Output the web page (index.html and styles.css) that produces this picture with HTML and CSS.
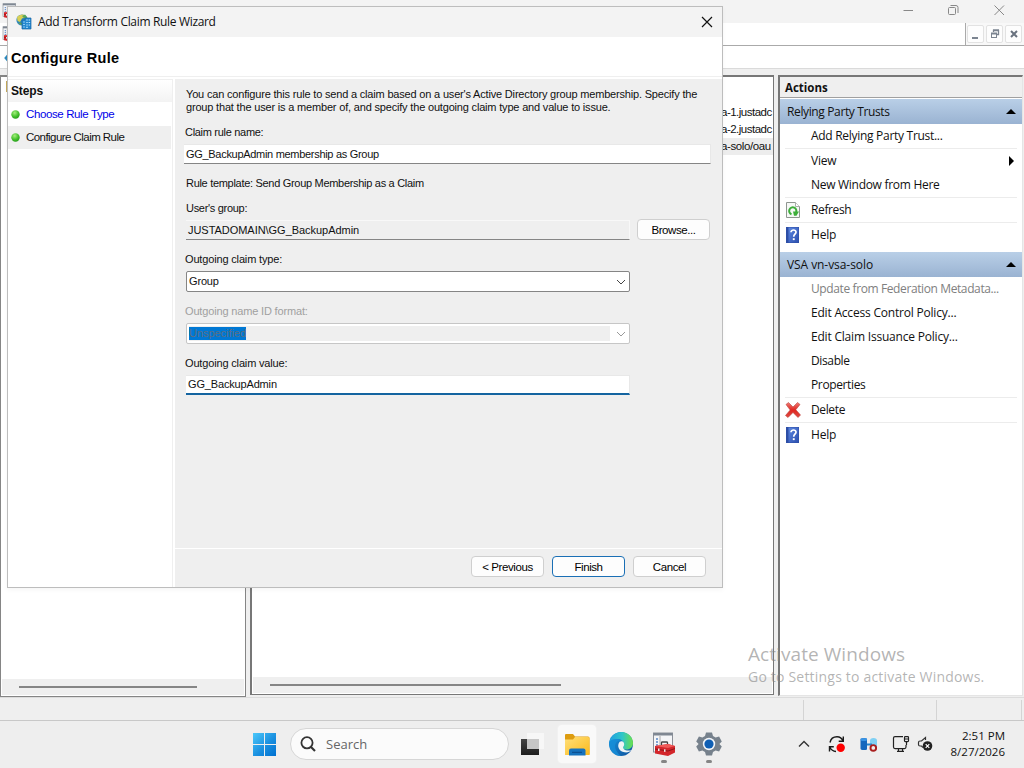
FILE: index.html
```html
<!DOCTYPE html>
<html lang="en">
<head>
<meta charset="utf-8">
<title>Add Transform Claim Rule Wizard</title>
<link rel="stylesheet" href="styles.css">
</head>
<body>
<svg class="defs" width="0" height="0">
  <defs>
    <linearGradient id="gWin" x1="0" y1="0" x2="1" y2="1"><stop offset="0" stop-color="#4cc8fa"/><stop offset="0.55" stop-color="#1a90e0"/><stop offset="1" stop-color="#0070d0"/></linearGradient>
    <linearGradient id="gHelp" x1="0" y1="0" x2="1" y2="1"><stop offset="0" stop-color="#5b86e0"/><stop offset="1" stop-color="#2c4fae"/></linearGradient>
    <linearGradient id="gFold" x1="0" y1="0" x2="1" y2="1"><stop offset="0" stop-color="#ffe07a"/><stop offset="1" stop-color="#fbb91c"/></linearGradient>
    <linearGradient id="gEdge" x1="0" y1="0" x2="1" y2="0"><stop offset="0" stop-color="#1f9fe0"/><stop offset="0.55" stop-color="#2fc6c8"/><stop offset="1" stop-color="#6be04a"/></linearGradient>
    <linearGradient id="gEdge2" x1="0" y1="0" x2="1" y2="1"><stop offset="0" stop-color="#1b9be2"/><stop offset="1" stop-color="#0d4f9c"/></linearGradient>
    <radialGradient id="gDot" cx="0.4" cy="0.3" r="0.75"><stop offset="0" stop-color="#a4ee7c"/><stop offset="0.6" stop-color="#43c02c"/><stop offset="1" stop-color="#259a18"/></radialGradient>
    <linearGradient id="gDel" x1="0" y1="0" x2="0" y2="1"><stop offset="0" stop-color="#f07c76"/><stop offset="0.5" stop-color="#df2620"/><stop offset="1" stop-color="#e04a42"/></linearGradient>
    <linearGradient id="gTask" x1="0" y1="0" x2="0" y2="1"><stop offset="0" stop-color="#444"/><stop offset="1" stop-color="#1c1c1c"/></linearGradient>
    <symbol id="help" viewBox="0 0 13 16"><rect width="13" height="16" fill="#2d4ea6"/><rect x="2.5" y=".5" width="10" height="15" fill="url(#gHelp)"/><path d="M5 5.300C5 2.200 10.200 2.300 10 5.300c-.1 1.900-2.300 2-2.300 4.400" fill="none" stroke="#fff" stroke-width="1.700"/><rect x="6.800" y="11.200" width="1.900" height="1.900" fill="#fff"/></symbol>
    <symbol id="toolbox" viewBox="0 0 24 24"><rect x="1.500" y="1" width="19" height="19" fill="#f4f5f7" stroke="#8a8f98"/><rect x="1.500" y="1" width="19" height="2.500" fill="#7f8792"/><path d="M4 7h2M4 10h2M4 13h2" stroke="#5a88c8" stroke-width="1.500"/><path d="M8 4v11" stroke="#aaa"/><path d="M9.500 13v-2.500q0-.5 1-.5h4q1 0 1 .5v2.500" fill="none" stroke="#444" stroke-width="1.300"/><path d="M3 14l13-2 7 2v6.500L16 24 3 21.500z" fill="#d3262b"/><path d="M3 14l13-2 7 2-7 2z" fill="#ef5a58"/><path d="M3 17l13 2 7-2.500" fill="none" stroke="#8e1418"/><rect x="6" y="16.500" width="1.500" height="2.500" fill="#eee"/><rect x="12" y="17.300" width="1.500" height="2.500" fill="#eee"/></symbol>
  </defs>
</svg>
<div class="desktop">
  <div class="console">
    <div class="console-title">
      <svg class="mini-icon" viewBox="0 0 24 24"><use href="#toolbox"/></svg>
      <svg class="caption-icons" width="120" height="23" viewBox="0 0 120 23" fill="none" stroke="#888"><path d="M3.500 10.500h9.500"/><rect x="48.500" y="7.500" width="7" height="7" rx="1"/><path d="M50.500 5.500h5.500q2 0 2 2v5.500"/><path d="M94.500 5.500l9.500 9.500m0-9.500l-9.500 9.500"/></svg>
    </div>
    <div class="console-menu">
      <div class="menu-strip"><svg class="mini-icon" viewBox="0 0 24 24"><use href="#toolbox"/></svg></div>
      <div class="mdi">
        <span class="mdi-btn"><svg width="16" height="16" viewBox="0 0 16 16"><path d="M4 12h6" stroke="#7b8490" stroke-width="2"/></svg></span>
        <span class="mdi-btn"><svg width="16" height="16" viewBox="0 0 16 16" fill="none" stroke="#7b8490"><path d="M6.500 6V4.500h5v4H10M6 4h6" stroke-width="1.300"/><rect x="4.500" y="7.500" width="5" height="4"/><path d="M4 7.500h6" stroke-width="2"/></svg></span>
        <span class="mdi-btn"><svg width="16" height="16" viewBox="0 0 16 16"><path d="M5 5l6 6m0-6l-6 6" stroke="#69727e" stroke-width="2"/></svg></span>
      </div>
    </div>
    <div class="console-tools"><svg width="10" height="12" viewBox="0 0 10 12"><path d="M9 2L5.500 6 9 10" fill="none" stroke="#2b8abf" stroke-width="2"/></svg></div>
    <div class="panes">
      <div class="pane tree"><div class="tree-body"><span class="folder"></span></div><div class="scroll"><span class="thumb"></span></div></div>
      <div class="pane list">
        <div class="list-body">
          <div class="list-row">a-1.justadc</div>
          <div class="list-row">a-2.justadc</div>
          <div class="list-row selected">a-solo/oau</div>
        </div>
        <div class="scroll"><span class="thumb"></span></div>
      </div>
      <div class="pane actions">
        <div class="actions-title">Actions</div>
        <div class="group-bar"><span class="t-rpt">Relying Party Trusts</span><b class="tri"></b></div>
        <div class="action"><i></i><span class="t-add">Add Relying Party Trust...</span></div>
        <div class="sep"></div>
        <div class="action"><i></i><span>View</span><b class="tri-right"></b></div>
        <div class="action"><i></i><span class="t-add">New Window from Here</span></div>
        <div class="sep"></div>
        <div class="action"><i><svg class="ic-refresh" width="14" height="16" viewBox="0 0 14 16"><path d="M.5.500h9l4 4v11H.500z" fill="#f6f8f6" stroke="#8f9690"/><path d="M9.500.500v4h4" fill="#fff" stroke="#a9aeaa"/><path d="M5.500 12.300A3.600 3.600 0 1 1 10 10.500" fill="none" stroke="#3dae3a" stroke-width="2"/><path d="M7 9.500h6l-2.500 4.200H8z" fill="#3dae3a"/></svg></i><span class="t-ref">Refresh</span></div>
        <div class="sep"></div>
        <div class="action"><i><svg class="ic-help" width="13" height="16"><use href="#help"/></svg></i><span>Help</span></div>
        <div class="group-bar second"><span class="t-vsa">VSA vn-vsa-solo</span><b class="tri"></b></div>
        <div class="action off"><i></i><span class="t-upd">Update from Federation Metadata...</span></div>
        <div class="action"><i></i><span class="t-edit">Edit Access Control Policy...</span></div>
        <div class="action"><i></i><span class="t-edit">Edit Claim Issuance Policy...</span></div>
        <div class="action"><i></i><span class="t-ref">Disable</span></div>
        <div class="action"><i></i><span class="t-ref">Properties</span></div>
        <div class="sep"></div>
        <div class="action"><i><svg width="16" height="16" viewBox="0 0 16 16"><path d="M1 2.500L3.500.500 8 5l4.500-4.500L15 2.500 10.800 7.700 15.500 13 13 15.500 8 10.500 3 15.500.500 13.500 5.200 8z" fill="url(#gDel)" stroke="#b8433e" stroke-width=".6"/></svg></i><span class="t-ref">Delete</span></div>
        <div class="sep"></div>
        <div class="action"><i><svg class="ic-help" width="13" height="16"><use href="#help"/></svg></i><span>Help</span></div>
      </div>
    </div>
    <div class="status"><span class="cell grow"></span><span class="cell mid"></span><span class="cell last"></span></div>
  </div>

  <div class="taskbar">
    <svg class="start" width="23" height="23" viewBox="0 0 23 23"><path d="M0 0h11v11H0zM12 0h11v11H12zM0 12h11v11H0zM12 12h11v11H12z" fill="url(#gWin)"/></svg>
    <div class="search"><svg width="16" height="16" viewBox="0 0 16 16" fill="none" stroke="#333" stroke-width="1.800"><circle cx="7" cy="6.800" r="5.600"/><path d="M11 11l4 4" stroke-width="2.200"/></svg><span>Search</span></div>
    <div class="app a1"><svg width="24" height="24" viewBox="0 0 24 24"><rect x="1" y="7" width="18" height="16" fill="url(#gTask)"/><rect x="7" y="1" width="17" height="16" fill="#f7f7f7"/><rect x="7" y="7" width="12" height="10" fill="#c6c6c6"/></svg></div>
    <div class="app active a2"><svg width="26" height="24" viewBox="0 0 26 24"><path d="M1 3q0-1 1-1h7l2 2.500h13q1.500 0 1.500 1.500v16.500H1z" fill="#dd9c10"/><path d="M1 7.500h8L11 5h13q1.500 0 1.500 1.500V23H1z" fill="url(#gFold)"/><path d="M5 23.500v-5q0-2 2-2h12.500q2 0 2 2v5z" fill="#1672bd"/><path d="M8 20.300h10" stroke="#0a4888"/></svg></div>
    <div class="app a3"><svg width="24" height="24" viewBox="0 0 24 24"><circle cx="12" cy="12" r="12" fill="url(#gEdge2)"/><path d="M.3 10C2 3.500 7 0 12.500 0 19 0 24 5 24 11c0 4-3 6.500-6.500 6.500-3 0-4.500-1.500-3.500-2.500 2.500-3 .5-7.500-5-8C5.500 6.800 2 8 .3 10z" fill="url(#gEdge)"/><path d="M.3 10C3 7 9 6 11.500 8.500 6 9 5 14 7 18c1.500 3 3.500 4.800 5 6C5 24-.5 18 .3 10z" fill="#168fd8" opacity=".8"/><path d="M10.500 10c-3 4-.5 9.500 5 10.300 3 .4 5.500-.5 7.300-2.300-2.500 1-6.500.8-8-1-1.200-1.300-.8-2 0-3 1-1.800 0-4.500-1.800-4.700-1 0-1.900.1-2.500.7z" fill="#eef4f6"/></svg></div>
    <div class="app a4"><svg width="24" height="24"><use href="#toolbox"/></svg><em></em></div>
    <div class="app a5"><svg width="26" height="26" viewBox="0 0 26 26"><path d="M10 1.500h6l1 3.400 2.600 1.500 3.500-.9 2.700 5-2.400 2.500 2.400 2.500-2.700 5-3.500-.9-2.600 1.500-1 3.400h-6l-1-3.400-2.600-1.500-3.500.9-2.700-5L2.600 13 .2 10.500l2.700-5 3.500.9L9 4.900z" fill="#76818c"/><circle cx="13" cy="13" r="6.200" fill="#f2f5f8"/><circle cx="13" cy="13" r="4.600" fill="#0f5fb4"/></svg><em></em></div>
    <div class="tray">
      <svg width="12" height="8" viewBox="0 0 12 8" fill="none" stroke="#333" stroke-width="1.400"><path d="M1 6.500l5-5 5 5"/></svg>
      <svg class="tr2" width="18" height="18" viewBox="0 0 18 18" fill="none" stroke="#1b1b1b" stroke-width="1.400"><path d="M2 7.500C2.800 3.500 6 1.700 9 1.700c3 0 5 1.600 6 4.300M15.300 1.500V6.300h-4.600"/><path d="M1.500 16.500v-4.800h4.300M2 12.500c1.200 2.500 3.300 3.800 6 4"/><circle cx="12.700" cy="12.800" r="4.200" fill="#f00" stroke="none"/></svg>
      <svg class="tr3" width="18" height="16" viewBox="0 0 18 16"><path d="M10 4.500q0-2.500 3.500-2.500T17 4.500v8h-7z" fill="#7fd0f4"/><path d="M.5 3.500Q.5 2 4 2t3 1.500v9Q7.500 14 4 14T.5 12.500z" fill="#1667bd"/><ellipse cx="3.800" cy="3.500" rx="3.300" ry="1.500" fill="#3a94e4"/><path d="M7 8.500h5" stroke="#2882c9" stroke-width="2"/><circle cx="13.300" cy="11.900" r="2.800" fill="#eee" stroke="#a91f1f" stroke-width="1.900"/></svg>
      <svg class="tr4" width="18" height="18" viewBox="0 0 18 18" fill="none" stroke="#222" stroke-width="1.200"><path d="M11 1.600H3q-1.500 0-1.500 1.500v9q0 1.500 1.500 1.500h9.500q1.500 0 1.500-1.500V10M5 16.400h7M6.500 14v2M10.500 14v2"/><rect x="12.500" y="1.600" width="4" height="5" rx=".8"/><path d="M12.500 4h4M14.500 6.600V10"/></svg>
      <svg class="tr5" width="16" height="16" viewBox="0 0 16 16"><path d="M8.500 4V1.500L4.500 5H3Q1.500 5 1.500 6.500v2Q1.500 10 3 10h1.500l1.500 1.500" fill="none" stroke="#333" stroke-width="1.200"/><circle cx="10.500" cy="10" r="4.800" fill="#222"/><path d="M8.700 8.200l3.600 3.600m0-3.600l-3.600 3.600" stroke="#fff" stroke-width="1.200"/></svg>
      <div class="clock"><span>2:51 PM</span><span>8/27/2026</span></div>
    </div>
  </div>

  <div class="watermark"><div class="w1">Activate Windows</div><div class="w2">Go to Settings to activate Windows.</div></div>

  <div class="dialog">
    <div class="dialog-title">
      <svg width="16" height="16" viewBox="0 0 16 16"><circle cx="6" cy="6" r="5.600" fill="#2d86bb"/><path d="M1 3.500C2.500 1 5.500.300 7.500.600L9 3 6 4.500 4 8 1.500 7z" fill="#d8cf55"/><path d="M6 2l3-1.500 2.500 3L9 5z" fill="#5aa85a"/><path d="M2 9l3.500-.5L6 11.300z" fill="#66a24a"/><path d="M6 6h3V4h6v11H6z" fill="#2488d0" stroke="#1764a5" stroke-width=".7"/><path d="M7.300 8h1.400M7.300 10.500h1.400M7.300 13h1.400M10.300 6h1.400M12.700 6h1.400M10.300 8.500h1.400M12.700 8.500h1.400M10.300 11h1.400M12.700 11h1.400M10.300 13.300h1.400" stroke="#b9e6ff" stroke-width="1.200"/></svg>
      <span class="t-title">Add Transform Claim Rule Wizard</span>
      <svg class="close" width="12" height="12" viewBox="0 0 12 12"><path d="M1 1l10 10M11 1L1 11" stroke="#111" stroke-width="1.200"/></svg>
    </div>
    <div class="dialog-head"><span>Configure Rule</span></div>
    <div class="dialog-main">
      <div class="steps">
        <div class="steps-title">Steps</div>
        <div class="step link"><svg width="9" height="9"><circle cx="4.500" cy="4.500" r="4.200" fill="url(#gDot)"/></svg><span class="t-s1">Choose Rule Type</span></div>
        <div class="step current"><svg width="9" height="9"><circle cx="4.500" cy="4.500" r="4.200" fill="url(#gDot)"/></svg><span class="t-s2">Configure Claim Rule</span></div>
      </div>
      <div class="form">
        <div class="form-body">
          <p class="desc">You can configure this rule to send a claim based on a user's Active Directory group membership. Specify the<br>group that the user is a member of, and specify the outgoing claim type and value to issue.</p>
          <div class="label l1"><span class="tight">Claim rule name:</span></div>
          <div class="field wide"><span class="tight">GG_BackupAdmin membership as Group</span></div>
          <div class="label l2"><span class="tight">Rule template: Send Group Membership as a Claim</span></div>
          <div class="label l3"><span class="tight">User's group:</span></div>
          <div class="pair"><div class="field readonly"><span class="loose">JUSTADOMAIN\GG_BackupAdmin</span></div><div class="button">Browse...</div></div>
          <div class="label l4"><span>Outgoing claim type:</span></div>
          <div class="combo"><span>Group</span><svg width="10" height="6" viewBox="0 0 10 6"><path d="M1 1l4 4 4-4" fill="none" stroke="#444"/></svg></div>
          <div class="label l5"><span>Outgoing name ID format:</span></div>
          <div class="combo disabled"><div class="inner"><span class="marked loose">Unspecified</span></div><svg width="10" height="6" viewBox="0 0 10 6"><path d="M1 1l4 4 4-4" fill="none" stroke="#999"/></svg></div>
          <div class="label l6"><span>Outgoing claim value:</span></div>
          <div class="field focus"><span>GG_BackupAdmin</span></div>
        </div>
        <div class="buttons"><div class="button">&lt; Previous</div><div class="button primary">Finish</div><div class="button">Cancel</div></div>
      </div>
    </div>
  </div>
</div>
</body>
</html>
```
FILE: styles.css
```css
* { box-sizing: border-box; }
body { margin: 0; overflow: hidden; }
svg { display: block; flex: none; }
.defs { position: absolute; }
.desktop { position: relative; width: 1024px; height: 768px; display: flex; flex-direction: column; background: #efefef; font: 12px/16px "Open Sans", "Noto Sans", sans-serif; color: #111; white-space: nowrap; overflow: hidden; }

/* Management console */
.console { height: 721px; display: flex; flex-direction: column; }
.console-title { height: 23px; display: flex; justify-content: space-between; padding-right: 4px; background: #f3f3f3; }
.mini-icon { width: 16px; height: 16px; margin: 3px 0 0 2px; }
.console-menu { height: 23px; display: flex; background: #fff; }
.menu-strip { flex: none; width: 966px; border-right: 1px solid #aaa; border-bottom: 1px solid #aaa; }
.mdi { flex: 1; display: flex; gap: 2px; padding: 2px 0 0 1px; border-bottom: 1px solid #aaa; background: #f8f8f8; }
.mdi-btn { width: 17px; height: 18px; border: 1px solid #e2e2e2; border-radius: 2px; background: #fdfdfd; }
.console-tools { height: 23px; border-bottom: 1px solid #dadada; background: #fff; padding: 6px 0 0 0; }
.panes { height: 629px; padding-top: 6px; display: flex; border-bottom: 1px solid #dcdcdc; }
.pane { flex: none; display: flex; flex-direction: column; background: #fff; border: 1px solid #858585; overflow: hidden; }
.tree { width: 246px; height: 622px; border-top-width: 2px; }
.tree-body { flex: 1; padding: 4px 0 0 5px; }
.folder { display: block; width: 9px; height: 11px; background: #ead38a; border: 1px solid #c5a95b; }
.scroll { height: 16px; margin: 0 1px 1px; padding: 7px 0 0 17px; background: #efefef; }
.thumb { display: block; height: 2px; background: #858585; }
.tree .thumb { width: 178px; }
.list { width: 524px; height: 620px; margin-left: 4px; border-width: 2px 1px 1px 2px; border-color: #777; }
.list-body { flex: 1; padding-top: 27px; }
.list-row { height: 17px; line-height: 17px; padding-left: 469px; font-family: "Liberation Sans", sans-serif; font-size: 11.5px; letter-spacing: -.5px; }
.list-row.selected { background: #ededed; letter-spacing: -.4px; }
.list .thumb { width: 291px; }
.actions { width: 245px; height: 621px; margin-left: 4px; border-width: 2px 1px 1px 2px; border-color: #777 #e5e5e5 #e5e5e5 #777; }
.actions-title { height: 21px; margin-bottom: 1px; border-bottom: 1px solid #a0a0a0; padding-left: 5px; background: #efefef; font-weight: 700; font-size: 11.5px; line-height: 22px; }
.group-bar { height: 25px; display: flex; align-items: center; justify-content: space-between; padding: 0 6px 0 7px; background: linear-gradient(#b9cfe7, #9ab3d2); }
.group-bar.second { margin-top: 5px; }
.group-bar span { padding-top: 1px; }
.tri { border: 5px solid transparent; border-top: 0; border-bottom-color: #000; }
.tri-right { border: 5px solid transparent; border-right: 0; border-left-color: #000; margin: 0 8px 0 auto; }
.action { height: 24px; display: flex; align-items: center; letter-spacing: -.2px; }
.action i { width: 31px; display: flex; padding-left: 5px; }
.ic-help, .ic-refresh { margin-left: 1px; }
.t-rpt, .t-ref { letter-spacing: -.37px; }
.t-add { letter-spacing: -.29px; }
.t-vsa { letter-spacing: -.07px; }
.t-upd { letter-spacing: -.39px; }
.t-edit { letter-spacing: -.2px; }
.off { color: #808080; }
.sep { height: 1px; margin: 0 5px; background: #ececec; }
.status { height: 23px; display: flex; border-bottom: 1px solid #c8c8c8; padding-top: 2px; }
.cell { flex: none; border-right: 1px solid #d4d4d4; height: 20px; }
.grow { width: 804px; }
.mid { width: 133px; }
.last { width: 85px; }

/* Taskbar */
.taskbar { height: 47px; display: flex; align-items: center; padding-bottom: 1px; background: #eee; }
.start { margin-left: 253px; }
.search { width: 219px; height: 32px; margin-left: 14px; border: 1px solid #d6d6d6; border-radius: 16px; background: #fbfbfb; display: flex; align-items: center; gap: 10px; padding-left: 9px; font-size: 13px; color: #666; }
.app { position: relative; width: 38px; height: 38px; display: flex; align-items: center; justify-content: center; }
.app em { position: absolute; width: 6px; height: 3px; border-radius: 2px; background: #858585; bottom: 0; left: 16px; }
.active { background: #f9f9f9; border-radius: 4px; box-shadow: 0 0 0 1px #f1f1f1; }
.a1 { margin-left: 4px; }
.a2, .a5 { margin-left: 7px; }
.a3 { margin-left: 6px; }
.a4 { margin-left: 5px; }
.tray { flex: 1; display: flex; align-items: center; justify-content: flex-end; padding-right: 19px; }
.tr2 { margin-left: 18px; }
.tr3, .tr4 { margin-left: 14px; }
.tr5 { margin-left: 7px; }
.clock { display: flex; flex-direction: column; align-items: flex-end; width: 72px; font-size: 11.5px; line-height: 16px; }

.watermark { position: absolute; left: 748px; top: 642px; color: rgba(130,130,130,.6); }
.w1 { font-size: 19px; line-height: 25px; letter-spacing: .07px; }
.w2 { font-size: 14px; line-height: 20px; letter-spacing: .2px; }

/* Wizard window */
.dialog { position: absolute; left: 7px; top: 6px; width: 716px; height: 582px; display: flex; flex-direction: column; border: 1px solid #bdbdbd; background: #fff; box-shadow: 0 2px 5px rgba(0,0,0,.04); }
.dialog-title { height: 30px; display: flex; align-items: center; gap: 6px; padding: 0 9px 0 8px; background: #f3f3f3; }
.t-title { letter-spacing: -.33px; }
.close { margin-left: auto; }
.dialog-head { height: 40px; border-bottom: 1px solid #efefef; padding-left: 3px; font: bold 14.5px/43px "Liberation Sans", sans-serif; letter-spacing: .32px; color: #000; }
.dialog-main { flex: 1; display: flex; padding-top: 2px; font: 11px/13px "Liberation Sans", sans-serif; letter-spacing: -.16px; }
.steps { flex: none; width: 165px; border-right: 1px solid #efefef; border-top: 1px solid #efefef; }
.steps-title { height: 22px; padding-left: 3px; background: linear-gradient(#fff, #f3f3f3); font-weight: 700; font-size: 12px; line-height: 23px; letter-spacing: -.15px; }
.step { height: 23px; display: flex; align-items: center; gap: 6px; padding-left: 3px; font-size: 11.5px; }
.link { height: 24px; padding-top: 1px; color: #0000e8; }
.current { background: #efefef; margin-right: 1px; }
.t-s1 { letter-spacing: -.38px; }
.t-s2 { letter-spacing: -.55px; }
.form { flex: 1; min-width: 0; margin-left: 2px; display: flex; flex-direction: column; background: #efefef; }
.form-body { height: 470px; padding: 9px 12px 0 9px; border-bottom: 1px solid #fff; }
.desc { margin: 0 0 0 2px; letter-spacing: -.18px; }
.label { height: 13px; padding-left: 1px; }
.tight { letter-spacing: -.3px; }
.loose { letter-spacing: -.04px; }
.l1 { margin: 12px 0 5px; }
.l2 { margin: 13px 0 12px; padding-left: 2px; }
.l3 { margin: 12px 0 4px; padding-left: 2px; }
.l4 { margin: 12px 0 5px; }
.l5 { margin: 13px 0 5px; color: #a0a0a0; }
.l6 { margin: 13px 0 5px; }
.field { height: 20px; display: flex; align-items: center; padding-left: 2px; background: #fff; border: 1px solid #e8e8e8; border-bottom-color: #858585; border-left: 0; }
.wide { width: 527px; }
.pair { display: flex; align-items: center; gap: 7px; height: 22px; margin: 0 0 0 2px; }
.pair .button { margin-bottom: 1px; }
.readonly { width: 444px; background: #efefef; border-color: #f8f8f8; border-bottom-color: #858585; }
.button { flex: none; width: 73px; height: 21px; display: flex; align-items: center; justify-content: center; padding-top: 1px; border: 1px solid #cfcfcf; border-radius: 4px; background: #fdfdfd; font-size: 11.5px; letter-spacing: -.42px; color: #000; }
.combo { width: 444px; height: 21px; margin-left: 2px; display: flex; align-items: center; justify-content: space-between; padding: 0 3px 0 2px; background: #fff; border: 1px solid #858585; border-radius: 2px; }
.disabled { border-color: #c6c6c6; }
.inner { width: 421px; height: 15px; display: flex; align-items: center; background: #efefef; }
.marked { background: #0078d4; color: #5c6f82; }
.focus { width: 444px; margin-left: 2px; border-bottom: 2px solid #1464a0; }
.buttons { display: flex; justify-content: flex-end; gap: 8px; padding: 7px 16px 0 0; }
.primary { border-color: #1a6fb5; }
```
